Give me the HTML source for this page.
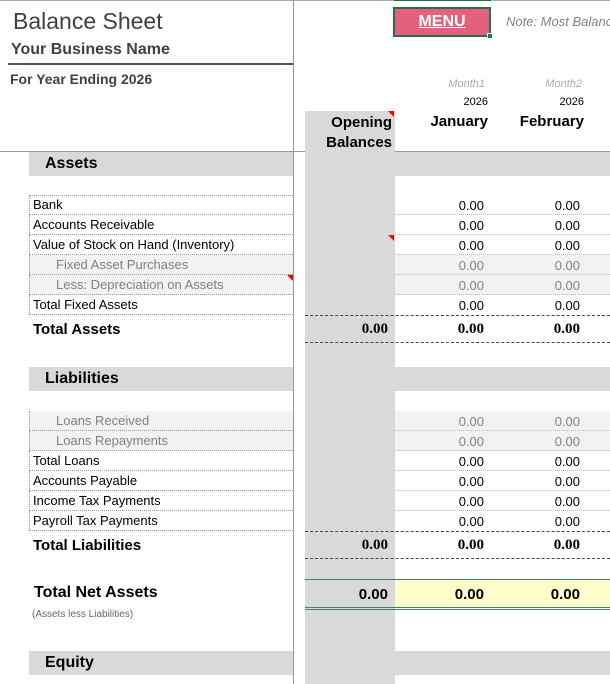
<!DOCTYPE html>
<html><head><style>
*{margin:0;padding:0;box-sizing:border-box}
body{width:610px;height:684px;overflow:hidden;background:#fff;position:relative;font-family:"Liberation Sans",Arial,sans-serif;color:#000}
.a{position:absolute;white-space:nowrap}
.bar{position:absolute;background:#d9d9d9;height:24px}
.row{position:absolute;left:29px;width:264px;height:20px;border-bottom:1px dotted #999;border-left:1px dotted #999;font-size:13px;line-height:19px;padding-left:3px}
.sub{background:#f2f2f2;color:#808080;padding-left:26px}
.v{position:absolute;font-size:13px;width:60px;text-align:right;line-height:19px}
.g{color:#808080}
.rl{position:absolute;left:395px;width:215px;height:20px;border-bottom:1px dotted #bbb}
.b{font-weight:bold;font-family:"Liberation Serif",serif;font-size:15px}
.dash{position:absolute;left:305px;width:305px;border-top:1px dashed #444}
.tri{position:absolute;width:0;height:0;border-top:6px solid #e00;border-left:6px solid transparent}
</style></head><body>
<div class="a" style="left:0;top:0;width:610px;border-top:1px solid #aaa"></div>
<div class="a" style="left:293px;top:0;height:684px;border-left:1px solid #999"></div>
<div class="a" style="left:0;top:151px;width:610px;border-top:1px solid #999"></div>
<div class="a" style="left:305px;top:111px;width:90px;height:573px;background:#d9d9d9"></div>

<div class="a" style="left:13px;top:8px;font-size:23px;color:#404040">Balance Sheet</div>
<div class="a" style="left:11px;top:41px;font-size:16px;font-weight:bold;color:#404040">Your Business Name</div>
<div class="a" style="left:8px;top:63px;width:285px;border-top:2px solid #44546a"></div>
<div class="a" style="left:10px;top:71px;font-size:14px;font-weight:bold;color:#404040">For Year Ending 2026</div>

<div class="a" style="left:394px;top:0;width:97px;border-top:1px solid #217346"></div>
<div class="a" style="left:393px;top:7px;width:98px;height:30px;border:2px solid #217346;background:#e3607e;color:#fff;font-weight:bold;font-size:16px;text-align:center;line-height:26px"><span style="text-decoration:underline">MENU</span></div>
<div class="a" style="left:487px;top:33px;width:6px;height:6px;background:#217346;border:1px solid #fff"></div>
<div class="a" style="left:506px;top:14px;font-size:13px;font-style:italic;color:#808080">Note: Most Balanc</div>

<div class="a g" style="left:424px;top:78px;width:61px;text-align:right;font-size:11px;font-style:italic;color:#aaa">Month1</div>
<div class="a g" style="left:522px;top:78px;width:60px;text-align:right;font-size:11px;font-style:italic;color:#aaa">Month2</div>
<div class="a" style="left:424px;top:96px;width:64px;text-align:right;font-size:11px">2026</div>
<div class="a" style="left:520px;top:96px;width:64px;text-align:right;font-size:11px">2026</div>
<div class="a" style="left:300px;top:113px;width:92px;text-align:right;font-size:15px;font-weight:bold;line-height:20px">Opening<br>Balances</div>
<div class="tri" style="left:388px;top:111px"></div>
<div class="a" style="left:420px;top:113px;width:68px;text-align:right;font-size:15px;font-weight:bold">January</div>
<div class="a" style="left:510px;top:113px;width:74px;text-align:right;font-size:15px;font-weight:bold">February</div>

<div class="bar" style="left:29px;top:152px;width:264px"></div>
<div class="bar" style="left:395px;top:152px;width:215px"></div>
<div class="a" style="left:45px;top:155px;font-size:16px;font-weight:bold">Assets</div>
<div class="a" style="left:29px;top:195px;width:264px;border-top:1px dotted #999"></div>

<div class="row" style="top:195px">Bank</div>
<div class="row" style="top:215px">Accounts Receivable</div>
<div class="row" style="top:235px">Value of Stock on Hand (Inventory)</div>
<div class="row sub" style="top:255px">Fixed Asset Purchases</div>
<div class="row sub" style="top:275px">Less: Depreciation on Assets</div>
<div class="row" style="top:295px">Total Fixed Assets</div>
<div class="tri" style="left:388px;top:235px"></div>
<div class="tri" style="left:287px;top:275px"></div>
<div class="rl" style="top:195px"></div><div class="rl" style="top:215px"></div><div class="rl" style="top:235px"></div>
<div class="rl" style="top:255px;background:#f2f2f2"></div><div class="rl" style="top:275px;background:#f2f2f2"></div>

<div class="v" style="left:424px;top:196px">0.00</div><div class="v" style="left:520px;top:196px">0.00</div>
<div class="v" style="left:424px;top:216px">0.00</div><div class="v" style="left:520px;top:216px">0.00</div>
<div class="v" style="left:424px;top:236px">0.00</div><div class="v" style="left:520px;top:236px">0.00</div>
<div class="v g" style="left:424px;top:256px">0.00</div><div class="v g" style="left:520px;top:256px">0.00</div>
<div class="v g" style="left:424px;top:276px">0.00</div><div class="v g" style="left:520px;top:276px">0.00</div>
<div class="v" style="left:424px;top:296px">0.00</div><div class="v" style="left:520px;top:296px">0.00</div>
<div class="dash" style="top:315px"></div>
<div class="a" style="left:33px;top:321px;font-size:15px;font-weight:bold">Total Assets</div>
<div class="v b" style="left:328px;top:320px">0.00</div><div class="v b" style="left:424px;top:320px">0.00</div><div class="v b" style="left:520px;top:320px">0.00</div>
<div class="dash" style="top:342px"></div>

<div class="bar" style="left:29px;top:367px;width:264px"></div>
<div class="bar" style="left:395px;top:367px;width:215px"></div>
<div class="a" style="left:45px;top:370px;font-size:16px;font-weight:bold">Liabilities</div>
<div class="a" style="left:29px;top:411px;width:264px;border-top:1px dotted #999"></div>
<div class="row sub" style="top:411px">Loans Received</div>
<div class="row sub" style="top:431px">Loans Repayments</div>
<div class="row" style="top:451px">Total Loans</div>
<div class="row" style="top:471px">Accounts Payable</div>
<div class="row" style="top:491px">Income Tax Payments</div>
<div class="row" style="top:511px">Payroll Tax Payments</div>
<div class="rl" style="top:411px;background:#f2f2f2"></div><div class="rl" style="top:431px;background:#f2f2f2"></div>
<div class="rl" style="top:451px"></div><div class="rl" style="top:471px"></div><div class="rl" style="top:491px"></div>
<div class="v g" style="left:424px;top:412px">0.00</div><div class="v g" style="left:520px;top:412px">0.00</div>
<div class="v g" style="left:424px;top:432px">0.00</div><div class="v g" style="left:520px;top:432px">0.00</div>
<div class="v" style="left:424px;top:452px">0.00</div><div class="v" style="left:520px;top:452px">0.00</div>
<div class="v" style="left:424px;top:472px">0.00</div><div class="v" style="left:520px;top:472px">0.00</div>
<div class="v" style="left:424px;top:492px">0.00</div><div class="v" style="left:520px;top:492px">0.00</div>
<div class="v" style="left:424px;top:512px">0.00</div><div class="v" style="left:520px;top:512px">0.00</div>
<div class="dash" style="top:531px"></div>
<div class="a" style="left:33px;top:537px;font-size:15px;font-weight:bold">Total Liabilities</div>
<div class="v b" style="left:328px;top:536px">0.00</div><div class="v b" style="left:424px;top:536px">0.00</div><div class="v b" style="left:520px;top:536px">0.00</div>
<div class="dash" style="top:558px"></div>

<div class="a" style="left:395px;top:580px;width:215px;height:27px;background:#ffffcc"></div>
<div class="a" style="left:305px;top:579px;width:305px;border-top:1px solid #4a7a62"></div>
<div class="a" style="left:305px;top:607px;width:305px;height:3px;border-top:1px solid #4a7a62;border-bottom:1px solid #4a7a62"></div>
<div class="a" style="left:34px;top:584px;font-size:16px;font-weight:bold">Total Net Assets</div>
<div class="v" style="left:328px;top:585px;font-size:15px;font-weight:bold">0.00</div>
<div class="v" style="left:424px;top:585px;font-size:15px;font-weight:bold">0.00</div>
<div class="v" style="left:520px;top:585px;font-size:15px;font-weight:bold">0.00</div>
<div class="a" style="left:32px;top:609px;font-size:10px;color:#666">(Assets less Liabilities)</div>

<div class="bar" style="left:29px;top:651px;width:264px"></div>
<div class="bar" style="left:395px;top:651px;width:215px"></div>
<div class="a" style="left:45px;top:654px;font-size:16px;font-weight:bold">Equity</div>
</body></html>
